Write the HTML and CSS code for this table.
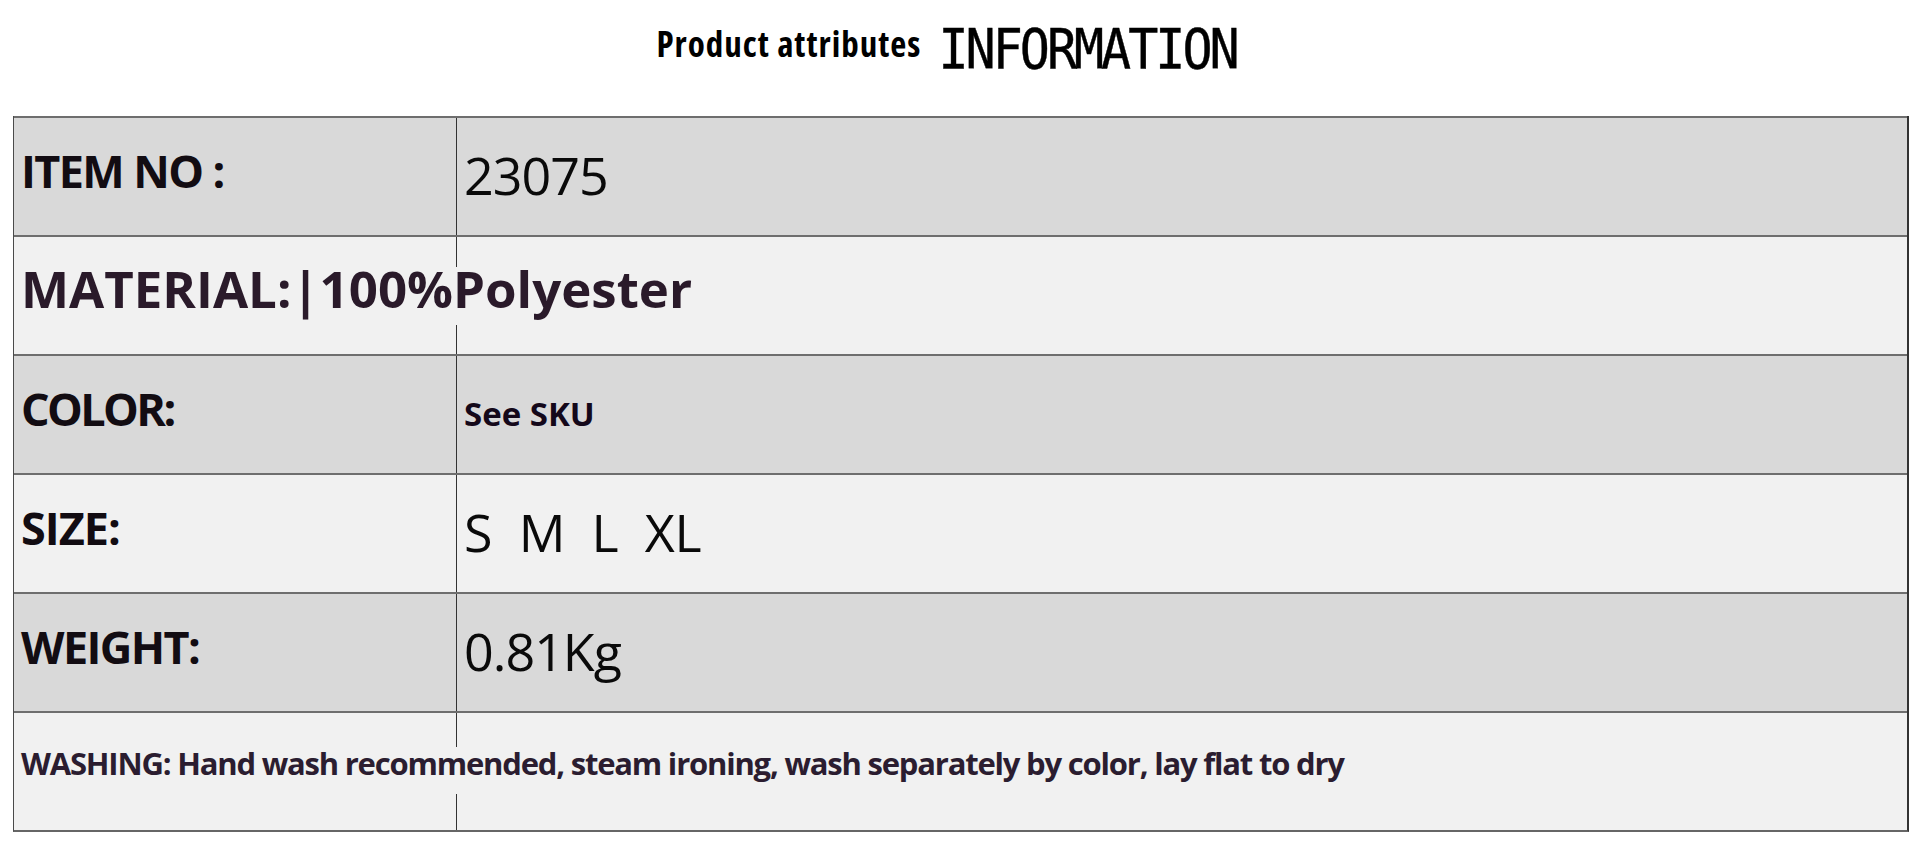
FILE: index.html
```html
<!DOCTYPE html>
<html lang="en">
<head>
<meta charset="utf-8">
<title>Product attributes INFORMATION</title>
<link rel="stylesheet" href="styles.css">
</head>
<body>
<header class="title">
  <span class="title-sub">Product attributes</span>
  <span class="title-main">INFORMATION</span>
</header>
<div class="attr-table">
  <div class="row row-dark">
    <div class="label"><span class="lbl">ITEM NO :</span></div>
    <div class="value"><span class="val">23075</span></div>
  </div>
  <div class="row row-light">
    <div class="label"><span class="over material">MATERIAL:|100%Polyester</span></div>
    <div class="value"></div>
  </div>
  <div class="row row-dark">
    <div class="label"><span class="lbl lbl-tight">COLOR:</span></div>
    <div class="value"><span class="sku">See SKU</span></div>
  </div>
  <div class="row row-light">
    <div class="label"><span class="lbl lbl-loose">SIZE:</span></div>
    <div class="value"><span class="val sizes">S&nbsp;&nbsp;M&nbsp;&nbsp;L&nbsp;&nbsp;XL</span></div>
  </div>
  <div class="row row-dark">
    <div class="label"><span class="lbl">WEIGHT:</span></div>
    <div class="value"><span class="val">0.81Kg</span></div>
  </div>
  <div class="row row-light">
    <div class="label"><span class="over washing">WASHING: Hand wash recommended, steam ironing, wash separately by color, lay flat to dry</span></div>
    <div class="value"></div>
  </div>
</div>
</body>
</html>
```
FILE: styles.css
```css
html, body {
  margin: 0;
  padding: 0;
  background: #ffffff;
}

body {
  font-family: "Open Sans", "Noto Sans", sans-serif;
  color: #111;
}

.title {
  height: 116px;
  box-sizing: border-box;
  display: flex;
  justify-content: center;
  align-items: flex-start;
  gap: 17px;
  padding-top: 24px;
  padding-right: 27px;
}

.title-sub {
  font-family: "Open Sans", sans-serif;
  font-weight: 700;
  font-stretch: 75%;
  font-size: 35px;
  line-height: 1;
  margin-top: 2px;
  color: #000;
  letter-spacing: 1px;
}

.title-main {
  display: inline-block;
  font-family: "DejaVu Sans Mono", "Liberation Mono", monospace;
  font-size: 50px;
  line-height: 1;
  letter-spacing: -3px;
  color: #000;
  -webkit-text-stroke: 0.4px #000;
  transform: scaleY(1.1);
  transform-origin: 50% 45%;
}

.attr-table {
  margin: 0 11px 0 13px;
  border-left: 1px solid #4a4a4a;
  border-right: 2px solid #333;
  border-bottom: 2px solid #666;
}

.row {
  display: grid;
  grid-template-columns: 442px 1fr;
  height: 119px;
  box-sizing: border-box;
  border-top: 2px solid #6e6e6e;
}

.row-dark { background: #d9d9d9; }
.row-light { background: #f1f1f1; }

.label {
  display: flex;
  align-items: center;
  padding-left: 7px;
  padding-bottom: 13px;
  white-space: nowrap;
  overflow: visible;
}

.value {
  display: flex;
  align-items: center;
  border-left: 1px solid #333;
  padding-left: 7px;
  padding-bottom: 4px;
  white-space: nowrap;
}

.lbl {
  font-weight: 700;
  font-size: 45px;
  line-height: 1;
  color: #120c12;
  letter-spacing: -1.6px;
}

.lbl-tight { letter-spacing: -2.6px; }
.lbl-loose { letter-spacing: -1px; }

.val {
  font-weight: 400;
  font-size: 52px;
  line-height: 1;
  color: #0a0a0a;
  letter-spacing: -1px;
}

.sizes {
  letter-spacing: -0.3px;
}

.sku {
  font-weight: 700;
  font-size: 33px;
  line-height: 1;
  color: #14081a;
  margin-bottom: -1px;
}

.over {
  position: relative;
  z-index: 1;
  display: inline-block;
  font-weight: 700;
}

.row-light .over { background: #f1f1f1; }

.material {
  font-size: 51px;
  line-height: 43px;
  padding-bottom: 15px;
  margin-top: 14px;
  color: #2a1a2a;
}

.washing {
  font-size: 31px;
  line-height: 33px;
  padding-bottom: 14px;
  margin-top: 11px;
  letter-spacing: -1.2px;
  color: #2b1d30;
}
```
